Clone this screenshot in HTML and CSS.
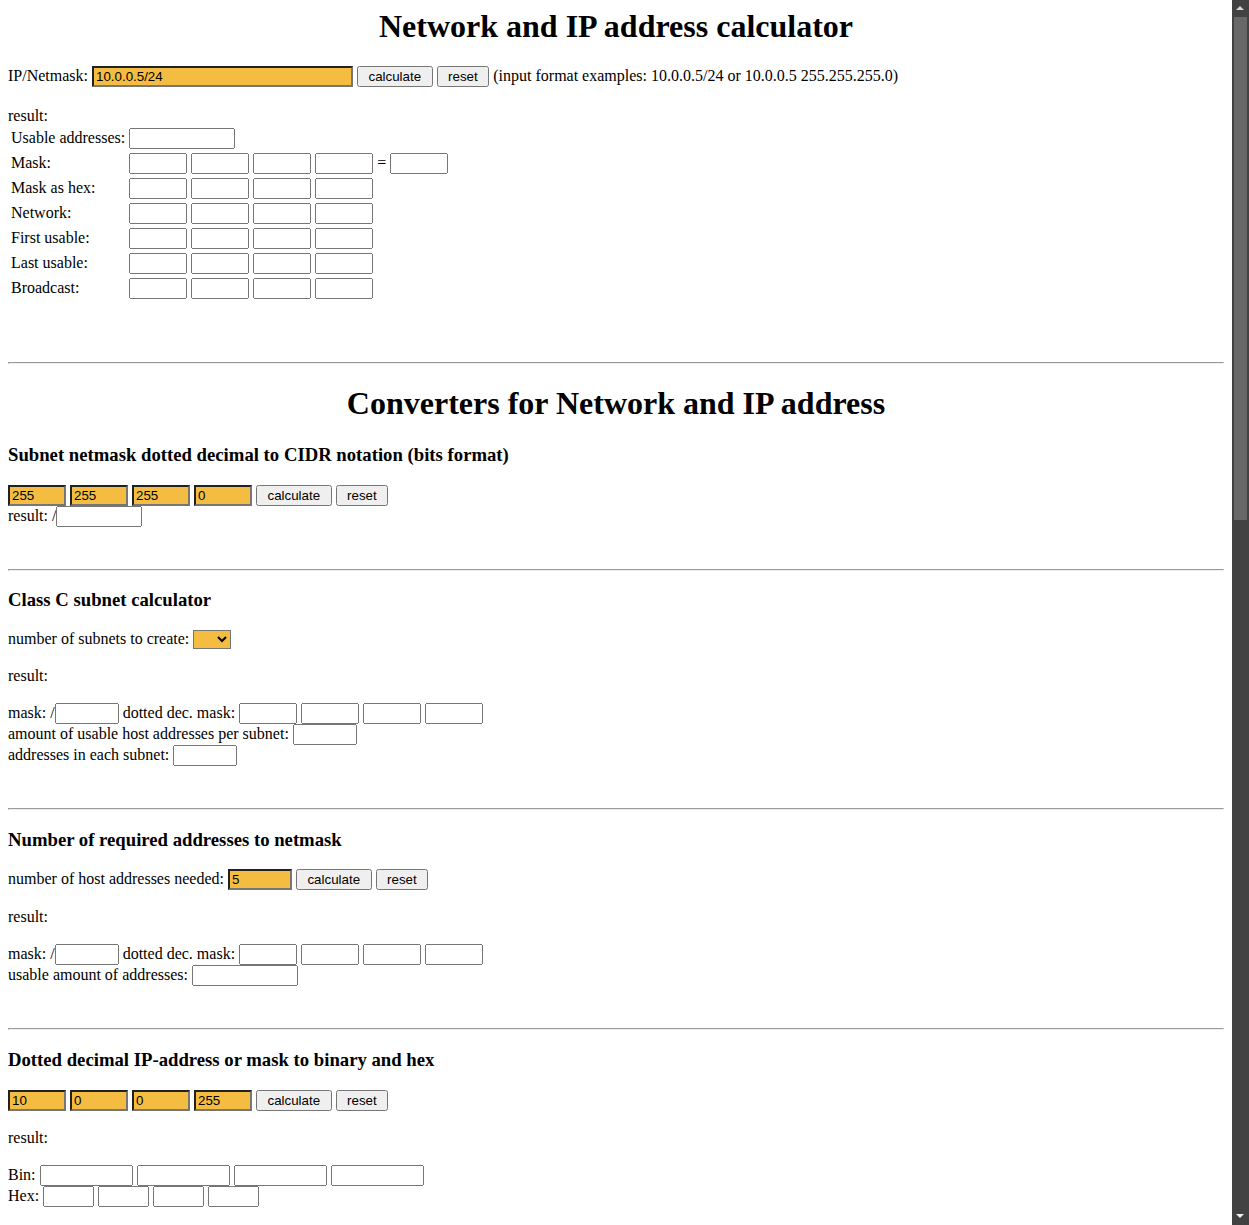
FILE: index.html
```html
<!DOCTYPE html>
<html lang="en">
<head>
<meta charset="utf-8">
<title>Network and IP address calculator</title>
<link rel="stylesheet" href="styles.css">
</head>
<body>
<main class="page">
<h1 class="title first">Network and IP address calculator</h1>
<form class="calc">
<p class="intro">IP/Netmask: <input class="field hl ip" type="text" value="10.0.0.5/24"> <button class="btn" type="button">calculate</button> <button class="btn" type="reset">reset</button> (input format examples: 10.0.0.5/24 or 10.0.0.5 255.255.255.0)</p>
<p class="result-label">result:</p>
<table class="result">
<tr><td>Usable addresses:</td><td><input class="field wide" type="text"></td></tr>
<tr><td>Mask:</td><td><input class="field" type="text"> <input class="field" type="text"> <input class="field" type="text"> <input class="field" type="text"> = <input class="field" type="text"></td></tr>
<tr><td>Mask as hex:</td><td><input class="field" type="text"> <input class="field" type="text"> <input class="field" type="text"> <input class="field" type="text"></td></tr>
<tr><td>Network:</td><td><input class="field" type="text"> <input class="field" type="text"> <input class="field" type="text"> <input class="field" type="text"></td></tr>
<tr><td>First usable:</td><td><input class="field" type="text"> <input class="field" type="text"> <input class="field" type="text"> <input class="field" type="text"></td></tr>
<tr><td>Last usable:</td><td><input class="field" type="text"> <input class="field" type="text"> <input class="field" type="text"> <input class="field" type="text"></td></tr>
<tr><td>Broadcast:</td><td><input class="field" type="text"> <input class="field" type="text"> <input class="field" type="text"> <input class="field" type="text"></td></tr>
</table>
</form>
<hr>
<h1 class="title">Converters for Network and IP address</h1>
<h3>Subnet netmask dotted decimal to CIDR notation (bits format)</h3>
<form>
<p class="tool"><input class="field hl" type="text" value="255"> <input class="field hl" type="text" value="255"> <input class="field hl" type="text" value="255"> <input class="field hl" type="text" value="0"> <button class="btn" type="button">calculate</button> <button class="btn" type="reset">reset</button><br>result: /<input class="field cidr" type="text"></p>
</form>
<hr>
<h3>Class C subnet calculator</h3>
<form>
<p class="tool">number of subnets to create: <select class="hl subnets"><option></option><option>2</option><option>4</option><option>8</option><option>16</option><option>32</option><option>64</option></select><br><br>result:<br><br>mask: /<input class="field short" type="text"> dotted dec. mask: <input class="field" type="text"> <input class="field" type="text"> <input class="field" type="text"> <input class="field" type="text"><br>amount of usable host addresses per subnet: <input class="field short" type="text"><br>addresses in each subnet: <input class="field short" type="text"></p>
</form>
<hr>
<h3>Number of required addresses to netmask</h3>
<form>
<p class="tool">number of host addresses needed: <input class="field hl short" type="text" value="5"> <button class="btn" type="button">calculate</button> <button class="btn" type="reset">reset</button><br><br>result:<br><br>mask: /<input class="field short" type="text"> dotted dec. mask: <input class="field" type="text"> <input class="field" type="text"> <input class="field" type="text"> <input class="field" type="text"><br>usable amount of addresses: <input class="field wide" type="text"></p>
</form>
<hr>
<h3>Dotted decimal IP-address or mask to binary and hex</h3>
<form>
<p class="tool"><input class="field hl" type="text" value="10"> <input class="field hl" type="text" value="0"> <input class="field hl" type="text" value="0"> <input class="field hl" type="text" value="255"> <button class="btn" type="button">calculate</button> <button class="btn" type="reset">reset</button><br><br>result:<br><br>Bin: <input class="field bin" type="text"> <input class="field bin" type="text"> <input class="field bin" type="text"> <input class="field bin" type="text"><br>Hex: <input class="field hex" type="text"> <input class="field hex" type="text"> <input class="field hex" type="text"> <input class="field hex" type="text"></p>
</form>
</main>
<div class="scrollbar" aria-hidden="true">
<span class="sb-arrow sb-up"></span>
<span class="sb-thumb"></span>
<span class="sb-arrow sb-down"></span>
</div>
</body>
</html>
```

FILE: styles.css
```css
body {
  margin: 8px 25px 8px 8px;
  background: #fff;
  color: #000;
  font-family: "Liberation Serif", "Times New Roman", serif;
  font-size: 16px;
}

.title {
  font-size: 32px;
  font-weight: bold;
  text-align: center;
  margin: 21.44px 0;
}

.title.first {
  margin-top: 0;
}

h3 {
  font-size: 18.72px;
  font-weight: bold;
  margin: 18.72px 0;
}

.intro {
  margin: 16px 0 0;
}

.result-label {
  margin: 19.5px 0 0;
}

.tool {
  margin: 16px 0 42px;
}

.result {
  border-collapse: separate;
  border-spacing: 2px;
  margin: 0 0 60px;
}

.result td {
  padding: 1px;
}

.field,
.btn,
.subnets {
  font-family: "Liberation Sans", Arial, sans-serif;
  font-size: 13.333px;
  color: #000;
}

.field {
  box-sizing: border-box;
  width: 58px;
}

.hl {
  background: #f4bd42;
}

.ip {
  width: 261px;
}

.wide {
  width: 106px;
}

.short {
  width: 64px;
}

.cidr {
  width: 86px;
}

.bin {
  width: 93px;
}

.hex {
  width: 51px;
}

.btn {
  padding: 1px 9.5px;
}

.subnets {
  width: 38px;
}

/* window scrollbar of the screenshot */
.scrollbar {
  position: fixed;
  top: 0;
  right: 0;
  width: 17px;
  height: 100vh;
  background: #424242;
}

.sb-thumb {
  position: absolute;
  top: 17px;
  left: 2px;
  width: 13px;
  height: 503px;
  background: #686868;
}

.sb-arrow {
  position: absolute;
  left: 4px;
  width: 0;
  height: 0;
  border-left: 4.5px solid transparent;
  border-right: 4.5px solid transparent;
}

.sb-up {
  top: 6px;
  border-bottom: 4px solid #d8d8d8;
}

.sb-down {
  bottom: 7px;
  border-top: 4px solid #f0f0f0;
}
```
